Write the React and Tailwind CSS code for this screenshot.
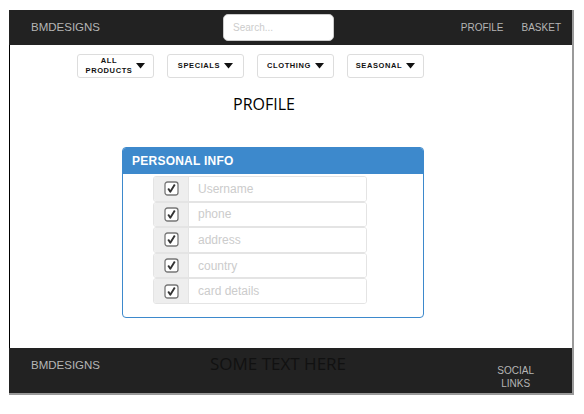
import React from "react";

const NAV = [
  { label: ["ALL", "PRODUCTS"] },
  { label: ["SPECIALS"] },
  { label: ["CLOTHING"] },
  { label: ["SEASONAL"] },
];

const FIELDS = ["Username", "phone", "address", "country", "card details"];

function Caret() {
  return (
    <svg width="9" height="6" viewBox="0 0 9 6" className="shrink-0">
      <path d="M0 0 H9 L4.5 5.5 Z" fill="#111" />
    </svg>
  );
}

function CheckIcon() {
  return (
    <svg width="15" height="15" viewBox="0 0 15 15">
      <rect x="1" y="1" width="13" height="13" rx="2.5" fill="#fff" stroke="#777" strokeWidth="1.3" />
      <path d="M4.2 7.6 L6.3 10.8 L10.8 3.6" fill="none" stroke="#333" strokeWidth="1.9" strokeLinejoin="round" />
    </svg>
  );
}

export default function App() {
  return (
    <div className="min-h-[414px] bg-white pl-[9px] pt-[10px] font-['Liberation_Sans',Arial,sans-serif]">
      <div className="w-[565px] border-r-2 border-[#9a9a9a]">
        <header className="flex h-[35px] items-center bg-[#222] pl-[22px] pr-[11px]">
          <span className="text-[11.5px] text-[#b5b5b5]">BMDESIGNS</span>
          <div className="ml-[123px] flex h-[27px] w-[111px] items-center rounded-[5px] border border-[#ccc] bg-white pl-[9px] text-[10px] text-[#ccc]">
            Search...
          </div>
          <nav className="ml-auto flex gap-[18px] text-[10px] text-[#b5b5b5]">
            <span>PROFILE</span>
            <span>BASKET</span>
          </nav>
        </header>

        <main className="h-[303px] border-l border-black pt-[9px]">
          <div className="ml-[67px] flex gap-[13px]">
            {NAV.map((n) => (
              <div
                key={n.label[0]}
                className="flex h-[24px] w-[77px] items-center justify-center gap-[4px] rounded-[3px] border border-[#ddd] bg-white"
              >
                <span className="text-center text-[7.5px] font-bold leading-[10px] tracking-[0.08em] text-[#111]">
                  {n.label.map((l) => (
                    <span key={l} className="block">{l}</span>
                  ))}
                </span>
                <Caret />
              </div>
            ))}
          </div>

          <h1 className="mt-[15px] pl-[223px] font-['Open_Sans',sans-serif] text-[16px] leading-[22px] text-black">
            PROFILE
          </h1>

          <section className="ml-[112px] mt-[32px] h-[171px] w-[302px] overflow-hidden rounded-[4px] border border-[#3d89cc] bg-white">
            <div className="flex h-[26px] items-center bg-[#3d89cc] pl-[9px] text-[12px] font-bold tracking-[0.02em] text-white">
              PERSONAL INFO
            </div>
            <div className="ml-[30px] mt-[2px] flex w-[214px] flex-col">
              {FIELDS.map((f) => (
                <div key={f} className="flex h-[25.6px] overflow-hidden rounded-[3px] border border-[#e4e4e4]">
                  <div className="flex w-[35px] items-center justify-center border-r border-[#e4e4e4] bg-[#eee]">
                    <CheckIcon />
                  </div>
                  <div className="flex flex-1 items-center bg-white pl-[9px] text-[12px] text-[#ccc]">{f}</div>
                </div>
              ))}
            </div>
          </section>
        </main>

        <footer className="flex h-[47px] items-start border-b-2 border-[#9a9a9a] bg-[#222] pl-[22px] pr-[38px]">
          <span className="mt-[9px] text-[11.5px] text-[#b5b5b5]">BMDESIGNS</span>
          <span className="ml-[110px] mt-[3px] font-['Open_Sans',sans-serif] text-[17px] text-[#111]">SOME TEXT HERE</span>
          <span className="ml-auto mt-[16px] text-center text-[10px] leading-[13px] text-[#b5b5b5]">
            SOCIAL
            <br />
            LINKS
          </span>
        </footer>
      </div>
    </div>
  );
}
